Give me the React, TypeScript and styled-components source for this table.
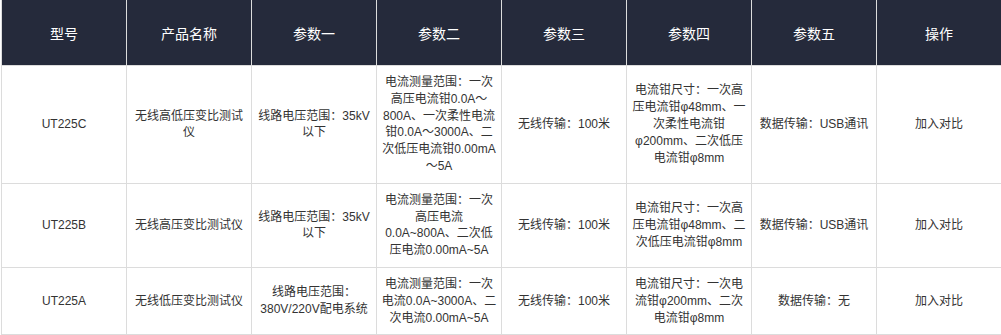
import styled, { createGlobalStyle } from "styled-components"

const GlobalStyle = createGlobalStyle`
    html, body {
        margin: 0;
        padding: 0;
        background: #fff;
    }
    body {
        font-family: "Liberation Sans", "Noto Sans CJK SC", sans-serif;
    }
`

const headers = ["型号", "产品名称", "参数一", "参数二", "参数三", "参数四", "参数五", "操作"]

const rows = [
    [
        "UT225C",
        "无线高低压变比测试仪",
        "线路电压范围：35kV以下",
        "电流测量范围：一次高压电流钳0.0A～800A、一次柔性电流钳0.0A～3000A、二次低压电流钳0.00mA～5A",
        "无线传输：100米",
        "电流钳尺寸：一次高压电流钳φ48mm、一次柔性电流钳φ200mm、二次低压电流钳φ8mm",
        "数据传输：USB通讯",
    ],
    [
        "UT225B",
        "无线高压变比测试仪",
        "线路电压范围：35kV以下",
        "电流测量范围：一次高压电流0.0A~800A、二次低压电流0.00mA~5A",
        "无线传输：100米",
        "电流钳尺寸：一次高压电流钳φ48mm、二次低压电流钳φ8mm",
        "数据传输：USB通讯",
    ],
    [
        "UT225A",
        "无线低压变比测试仪",
        "线路电压范围：380V/220V配电系统",
        "电流测量范围：一次电流0.0A~3000A、二次电流0.00mA~5A",
        "无线传输：100米",
        "电流钳尺寸：一次电流钳φ200mm、二次电流钳φ8mm",
        "数据传输：无",
    ],
]

export default function App() {
    return (
        <>
            <GlobalStyle />
            <Wrap>
                <CompareTable>
                    <colgroup>
                        {headers.map((h) => (
                            <col key={h} />
                        ))}
                    </colgroup>
                    <thead>
                        <tr>
                            {headers.map((h) => (
                                <HeadCell key={h}>{h}</HeadCell>
                            ))}
                        </tr>
                    </thead>
                    <tbody>
                        {rows.map((row) => (
                            <tr key={row[0]}>
                                {row.map((cell, i) => (
                                    <Cell key={i}>{cell}</Cell>
                                ))}
                                <Cell>
                                    <CompareLink href="#">加入对比</CompareLink>
                                </Cell>
                            </tr>
                        ))}
                    </tbody>
                </CompareTable>
            </Wrap>
        </>
    )
}

const Wrap = styled.div`
    padding-left: 1px;
`

const CompareTable = styled.table`
    width: 1000px;
    table-layout: fixed;
    border-collapse: collapse;
    border-spacing: 0;

    col {
        width: 125px;
    }
`

const HeadCell = styled.th`
    height: 65px;
    padding: 0 4px;
    background-color: #252a3b;
    color: #fff;
    font-size: 14px;
    font-weight: normal;
    text-align: center;
    vertical-align: middle;
    border: 1px solid #dcdcdc;
    border-top: none;
`

const Cell = styled.td`
    padding: 8px 4px;
    color: #333;
    font-size: 12px;
    line-height: 1.4;
    text-align: center;
    vertical-align: middle;
    border: 1px solid #dcdcdc;
`

const CompareLink = styled.a`
    color: #333;
    text-decoration: none;
    cursor: pointer;
`
